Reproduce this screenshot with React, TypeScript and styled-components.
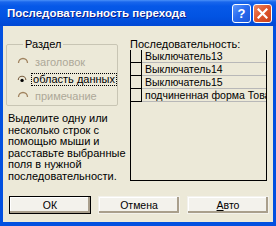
import React from 'react'
import styled, { createGlobalStyle } from 'styled-components'

const GlobalStyle = createGlobalStyle`
  html, body {
    margin: 0;
    padding: 0;
    background: #ffffff;
  }
  body {
    font-family: 'Liberation Sans', Arial, sans-serif;
  }
`

const sequence = ['Выключатель13', 'Выключатель14', 'Выключатель15', 'подчиненная форма Товар']

const sections = [
  { label: 'заголовок', enabled: false, checked: false },
  { label: 'область данных', enabled: true, checked: true },
  { label: 'примечание', enabled: false, checked: false },
]

const hint = ['Выделите одну или', 'несколько строк с', 'помощью мыши и', 'расставьте выбранные', 'поля в нужной', 'последовательности.']

const RadioMark: React.FC<{ checked: boolean; enabled: boolean }> = ({ checked, enabled }) => (
  <svg width="12" height="12" viewBox="0 0 12 12">
    <path d="M1.5 6 A4.5 4.5 0 0 1 10.5 6" fill="none" stroke={enabled ? '#7A5E40' : '#A0835F'} strokeWidth="1.3" />
    {checked && <circle cx="6" cy="6.5" r="2" fill="#000" />}
  </svg>
)

const App: React.FC = () => {
  return (
    <>
      <GlobalStyle />
      <Window>
        <TitleBar>
          <Title>Последовательность перехода</Title>
          <CaptionButton $kind="help">?</CaptionButton>
          <CaptionButton $kind="close">
            <svg width="11" height="11" viewBox="0 0 11 11">
              <path d="M1.5 1.5 L9.5 9.5 M9.5 1.5 L1.5 9.5" stroke="#fff" strokeWidth="2.2" strokeLinecap="square" />
            </svg>
          </CaptionButton>
        </TitleBar>

        <Body>
          <Content>
            <LeftColumn>
              <GroupBox>
                <Legend>Раздел</Legend>
                {sections.map((s) => (
                  <RadioRow key={s.label} $enabled={s.enabled}>
                    <RadioMark checked={s.checked} enabled={s.enabled} />
                    <RadioLabel $focused={s.checked}>{s.label}</RadioLabel>
                  </RadioRow>
                ))}
              </GroupBox>
              <Hint>
                {hint.map((line) => (
                  <div key={line}>{line}</div>
                ))}
              </Hint>
            </LeftColumn>

            <RightColumn>
              <FieldLabel>Последовательность:</FieldLabel>
              <ListBox>
                {sequence.map((item) => (
                  <ListRow key={item}>
                    <Selector />
                    <Cell>{item}</Cell>
                  </ListRow>
                ))}
              </ListBox>
            </RightColumn>
          </Content>

          <ButtonRow>
            <Button $default>ОК</Button>
            <Button>Отмена</Button>
            <Button>
              <u>А</u>вто
            </Button>
          </ButtonRow>
        </Body>
      </Window>
    </>
  )
}

const Window = styled.div`
  width: 276px;
  height: 226px;
  display: flex;
  flex-direction: column;
  background: #0250e0;
  overflow: hidden;
`

const TitleBar = styled.div`
  height: 26px;
  flex: none;
  display: flex;
  align-items: center;
  gap: 2px;
  padding: 0 4px 0 7px;
  background: linear-gradient(#4a90f8 0, #1966ec 2px, #0658e8 6px, #0254e3 16px, #0148d4 100%);
`

const Title = styled.div`
  flex: 1;
  color: #ffffff;
  font-size: 11.5px;
  font-weight: bold;
  text-shadow: 1px 1px #0a1e8c;
  white-space: nowrap;
`

const CaptionButton = styled.div<{ $kind: 'help' | 'close' }>`
  width: 17px;
  height: 17px;
  border: 1px solid #ffffff;
  border-radius: 3px;
  display: flex;
  align-items: center;
  justify-content: center;
  color: #ffffff;
  font-size: 13px;
  font-weight: bold;
  background: ${(p) =>
    p.$kind === 'close'
      ? 'linear-gradient(135deg, #ec8a66 0%, #e0582f 45%, #c8401c 100%)'
      : 'linear-gradient(135deg, #5f98fb 0%, #2a6cf0 45%, #1b56d8 100%)'};
`

const Body = styled.div`
  flex: 1;
  margin: 0 3px 4px;
  background: #ece9d8;
  display: flex;
  flex-direction: column;
  font-size: 11px;
  color: #000000;
`

const Content = styled.div`
  display: grid;
  grid-template-columns: 112px 137px;
  column-gap: 12px;
  padding: 12px 6px 0 3px;
`

const LeftColumn = styled.div`
  display: flex;
  flex-direction: column;
`

const GroupBox = styled.fieldset`
  margin: 0;
  padding: 4px 0 0 10px;
  height: 68px;
  box-sizing: border-box;
  border: 1px solid #c8c5b4;
  border-radius: 2px;
  min-width: 0;
`

const Legend = styled.legend`
  padding: 0 2px;
  margin-left: 6px;
  font-size: 11px;
  line-height: 12px;
`

const RadioRow = styled.div<{ $enabled: boolean }>`
  height: 17px;
  display: flex;
  align-items: center;
  gap: 4px;
  white-space: nowrap;
  color: ${(p) => (p.$enabled ? '#000000' : '#aca899')};
`

const RadioLabel = styled.span<{ $focused: boolean }>`
  padding: 0 1px;
  line-height: 11px;
  white-space: nowrap;
  border: 1px dotted ${(p) => (p.$focused ? '#000000' : 'transparent')};
`

const Hint = styled.div`
  margin-top: 7px;
  line-height: 11.6px;
  white-space: nowrap;
  padding-left: 2px;
`

const RightColumn = styled.div`
  display: flex;
  flex-direction: column;
`

const FieldLabel = styled.div`
  line-height: 12px;
`

const ListBox = styled.div`
  height: 131px;
  box-sizing: border-box;
  border: 1px solid #000000;
  border-top: none;
  background: #ece9d8;
  overflow: hidden;
`

const ListRow = styled.div`
  display: grid;
  grid-template-columns: 11px 1fr;
  height: 13px;
`

const Selector = styled.div`
  border-right: 1px solid #000000;
  border-bottom: 1px solid #000000;
`

const Cell = styled.div`
  border-bottom: 1px solid #b8b8b8;
  padding-left: 3px;
  line-height: 12px;
  font-size: 10.5px;
  white-space: nowrap;
  overflow: hidden;
`

const ButtonRow = styled.div`
  margin-top: auto;
  display: flex;
  gap: 7px;
  padding: 0 0 8px 6px;
`

const Button = styled.div<{ $default?: boolean }>`
  width: 82px;
  height: 18px;
  box-sizing: border-box;
  display: flex;
  align-items: center;
  justify-content: center;
  font-size: 10.5px;
  background: #f3f2ec;
  border: 1px solid ${(p) => (p.$default ? '#000000' : 'transparent')};
  box-shadow: inset -2px -2px 0 #a99f8c, inset 1px 1px 0 #ffffff;
`

export default App
